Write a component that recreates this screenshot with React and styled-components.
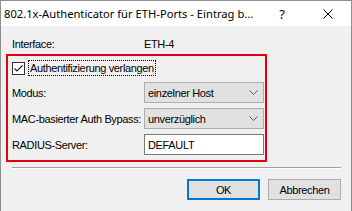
import React from 'react';
import styled, { createGlobalStyle } from 'styled-components';

const Global = createGlobalStyle`
  html, body { margin: 0; padding: 0; background: #f0f0f0; }
  #root { width: 352px; height: 211px; }
`;

const Window = styled.div`
  width: 352px;
  height: 211px;
  box-sizing: border-box;
  border: 1px solid #8f8f8f;
  border-bottom: none;
  background: #f0f0f0;
  overflow: hidden;
  font-family: "Liberation Sans", Arial, sans-serif;
  font-size: 11px;
  letter-spacing: -0.35px;
  color: #000;
`;

const TitleBar = styled.div`
  height: 25px;
  background: #fff;
  display: flex;
  align-items: center;
`;

const Title = styled.div`
  flex: 1;
  min-width: 0;
  padding-left: 3px;
  font-family: "Noto Sans", "Open Sans", sans-serif;
  font-size: 11.2px;
  letter-spacing: 0;
  white-space: nowrap;
`;

const CaptionButton = styled.div`
  flex: none;
  width: 46px;
  height: 25px;
  display: flex;
  align-items: center;
  justify-content: center;
  font-family: "Noto Sans", sans-serif;
  font-size: 13px;
  letter-spacing: 0;
`;

const Content = styled.div`
  padding: 9px 10px 0 5px;
`;

const InfoRow = styled.div`
  height: 18px;
  display: flex;
  align-items: center;
  padding-left: 6px;
`;

const Label = styled.div`
  width: 132px;
  flex: none;
  white-space: nowrap;
`;

const Highlight = styled.div`
  margin-top: 1px;
  width: 261px;
  box-sizing: border-box;
  border: 2px solid #e3000f;
  padding: 3px 1px 5px 4px;
  display: flex;
  flex-direction: column;
  gap: 5px;
`;

const CheckRow = styled.div`
  height: 18px;
  display: flex;
  align-items: center;
`;

const FocusLabel = styled.span`
  margin-left: 3px;
  border: 1px dotted #000;
  padding: 0 1px;
  line-height: 14px;
  white-space: nowrap;
`;

const FieldRow = styled.div`
  height: 21px;
  display: flex;
  align-items: center;
`;

const Combo = styled.div`
  width: 120px;
  height: 21px;
  box-sizing: border-box;
  border: 1px solid #adadad;
  background: #e1e1e1;
  display: flex;
  align-items: center;
  justify-content: space-between;
  padding: 0 5px 0 3px;
  white-space: nowrap;
`;

const Edit = styled.div`
  width: 120px;
  height: 21px;
  box-sizing: border-box;
  border: 1px solid #7a7a7a;
  background: #fff;
  display: flex;
  align-items: center;
  padding-left: 3px;
`;

const Separator = styled.div`
  margin: 5px 0 0 6px;
  border-top: 1px solid #a0a0a0;
  border-bottom: 1px solid #fff;
`;

const ButtonRow = styled.div`
  margin-top: 10px;
  display: flex;
  justify-content: flex-end;
  gap: 8px;
`;

const Button = styled.div`
  width: 73px;
  height: 21px;
  box-sizing: border-box;
  border: ${p => (p.$default ? '2px solid #0078d7' : '1px solid #adadad')};
  background: #e1e1e1;
  display: flex;
  align-items: center;
  justify-content: center;
`;

const Chevron = () => (
  <svg width="9" height="5" viewBox="0 0 9 5">
    <polyline points="0.5,0.5 4.5,4.5 8.5,0.5" fill="none" stroke="#606060" strokeWidth="1" />
  </svg>
);

const CloseIcon = () => (
  <svg width="10" height="10" viewBox="0 0 10 10">
    <path d="M0.5 0.5 L9.5 9.5 M9.5 0.5 L0.5 9.5" stroke="#000" strokeWidth="1" />
  </svg>
);

const CheckBox = () => (
  <svg width="13" height="13" viewBox="0 0 13 13">
    <rect x="0.5" y="0.5" width="12" height="12" fill="#fff" stroke="#333" />
    <path d="M2.5 6.5 L5 9 L10.5 3.5" fill="none" stroke="#222" strokeWidth="1.2" />
  </svg>
);

export default function App() {
  return (
    <>
      <Global />
      <Window>
        <TitleBar>
          <Title>802.1x-Authenticator für ETH-Ports - Eintrag b...</Title>
          <CaptionButton>?</CaptionButton>
          <CaptionButton><CloseIcon /></CaptionButton>
        </TitleBar>
        <Content>
          <InfoRow>
            <Label>Interface:</Label>
            <span>ETH-4</span>
          </InfoRow>
          <Highlight>
            <CheckRow>
              <CheckBox />
              <FocusLabel>Authentifizierung verlangen</FocusLabel>
            </CheckRow>
            <FieldRow>
              <Label>Modus:</Label>
              <Combo><span>einzelner Host</span><Chevron /></Combo>
            </FieldRow>
            <FieldRow>
              <Label>MAC-basierter Auth Bypass:</Label>
              <Combo><span>unverzüglich</span><Chevron /></Combo>
            </FieldRow>
            <FieldRow>
              <Label>RADIUS-Server:</Label>
              <Edit>DEFAULT</Edit>
            </FieldRow>
          </Highlight>
          <Separator />
          <ButtonRow>
            <Button $default>OK</Button>
            <Button>Abbrechen</Button>
          </ButtonRow>
        </Content>
      </Window>
    </>
  );
}
